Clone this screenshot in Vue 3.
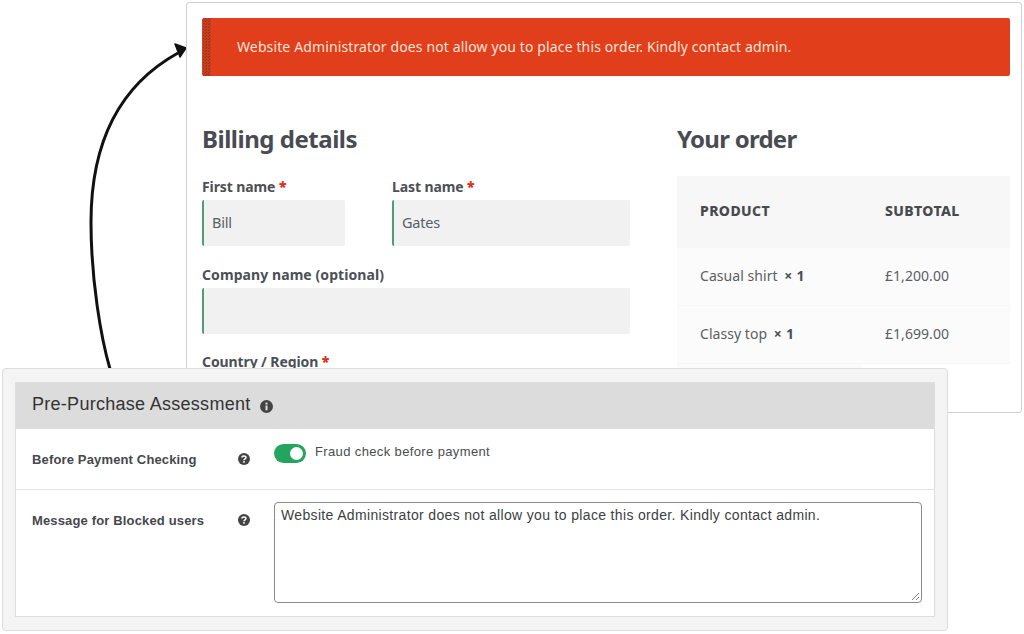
<script setup>
const orders = [
  { name: 'Casual shirt', price: '£1,200.00' },
  { name: 'Classy top', price: '£1,699.00' },
]
</script>

<template>
  <div class="canvas">
    <svg class="arrow" width="200" height="380" viewBox="0 0 200 380">
      <path d="M110 369C101 338 91 280 91 222C91 138 122 84 178 53" fill="none" stroke="#111" stroke-width="3" />
      <path d="M186 48L175 44L180 57Z" fill="#111" stroke="#111" stroke-width="1.5" stroke-linejoin="round" />
    </svg>

    <section class="shop">
      <div class="banner">Website Administrator does not allow you to place this order. Kindly contact admin.</div>
      <div class="columns">
        <div class="billing">
          <h2 class="bill-h">Billing details</h2>
          <div class="name-row">
            <div class="field first">
              <label>First name <b>*</b></label>
              <div class="input">Bill</div>
            </div>
            <div class="field last">
              <label>Last name <b>*</b></label>
              <div class="input">Gates</div>
            </div>
          </div>
          <div class="field company">
            <label>Company name (optional)</label>
            <div class="input"></div>
          </div>
          <div class="field country">
            <label>Country / Region <b>*</b></label>
          </div>
        </div>
        <div class="order">
          <h2>Your order</h2>
          <div class="table">
            <div class="thead">
              <span class="c1">PRODUCT</span>
              <span class="c2">SUBTOTAL</span>
            </div>
            <div v-for="o in orders" :key="o.name" class="trow">
              <span class="c1">{{ o.name }} <b>× 1</b></span>
              <span class="c2">{{ o.price }}</span>
            </div>
            <div class="tfoot"></div>
          </div>
        </div>
      </div>
    </section>

    <section class="admin">
      <div class="inner">
        <header class="head">
          <span>Pre-Purchase Assessment</span>
          <svg class="ico" width="13" height="13" viewBox="0 0 13 13">
            <circle cx="6.5" cy="6.5" r="6.5" fill="#444" />
            <rect x="5.5" y="5.5" width="2" height="4.8" fill="#e0e0e0" />
            <rect x="5.5" y="2.6" width="2" height="1.9" fill="#e0e0e0" />
          </svg>
        </header>
        <div class="row r1">
          <div class="lab">
            <span>Before Payment Checking</span>
            <svg class="ico" width="12" height="12" viewBox="0 0 12 12">
              <circle cx="6" cy="6" r="6" fill="#444" />
              <path d="M4 4.6C4 2.4 8 2.4 8 4.5C8 5.9 6 5.8 6 7.2" fill="none" stroke="#fff" stroke-width="1.5" />
              <rect x="5.2" y="8.1" width="1.6" height="1.6" fill="#fff" />
            </svg>
          </div>
          <div class="ctl check">
            <span class="toggle"><i></i></span>
            <span class="tl">Fraud check before payment</span>
          </div>
        </div>
        <div class="row r2">
          <div class="lab">
            <span>Message for Blocked users</span>
            <svg class="ico" width="12" height="12" viewBox="0 0 12 12">
              <circle cx="6" cy="6" r="6" fill="#444" />
              <path d="M4 4.6C4 2.4 8 2.4 8 4.5C8 5.9 6 5.8 6 7.2" fill="none" stroke="#fff" stroke-width="1.5" />
              <rect x="5.2" y="8.1" width="1.6" height="1.6" fill="#fff" />
            </svg>
          </div>
          <div class="ctl">
            <div class="area">
              Website Administrator does not allow you to place this order. Kindly contact admin.
              <svg class="grip" width="9" height="9" viewBox="0 0 9 9">
                <path d="M1 8L8 1M5 8L8 5" stroke="#888" stroke-width="1" fill="none" />
              </svg>
            </div>
          </div>
        </div>
      </div>
    </section>
  </div>
</template>

<style scoped>
.canvas {
  position: relative;
  width: 1024px;
  height: 634px;
  overflow: hidden;
  background: #fff;
}
.arrow {
  position: absolute;
  left: 0;
  top: 0;
}

/* Checkout window */
.shop {
  position: absolute;
  left: 186px;
  top: 2px;
  width: 836px;
  height: 411px;
  box-sizing: border-box;
  border: 1px solid #cfcfcf;
  border-radius: 3px;
  background: #fff;
  padding: 15px 11px 0 15px;
  font-family: "Noto Sans", "Open Sans", sans-serif;
  color: #4c5056;
}
.banner {
  position: relative;
  height: 58px;
  box-sizing: border-box;
  background: #e13f1b;
  border-radius: 2px;
  padding-left: 35px;
  color: #fbe3da;
  font-size: 14px;
  letter-spacing: 0.125px;
  line-height: 58px;
}
.banner::before {
  content: "";
  position: absolute;
  left: 1px;
  top: 0;
  bottom: 0;
  width: 8px;
  background:
    linear-gradient(45deg, #7d3a27 25%, transparent 25%, transparent 75%, #7d3a27 75%) 0 0 / 3px 3px,
    #c93d1c;
}
.columns {
  display: flex;
  gap: 47px;
  margin-top: 47px;
}
.billing {
  width: 428px;
  flex: none;
}
.order {
  flex: 1;
}
h2 {
  margin: 0;
  font-size: 24px;
  line-height: 32px;
  font-weight: 700;
  letter-spacing: -0.75px;
  color: #484c52;
}
.bill-h {
  letter-spacing: -0.48px;
}
.name-row {
  display: flex;
  gap: 47px;
  margin-top: 22px;
}
.field label {
  display: block;
  font-size: 14px;
  line-height: 20px;
  font-weight: 700;
  letter-spacing: -0.1px;
  color: #4c5056;
}
.field label b {
  color: #d8321a;
}
.first {
  width: 143px;
}
.last {
  flex: 1;
}
.input {
  height: 46px;
  margin-top: 3px;
  box-sizing: border-box;
  background: #f1f1f1;
  border-left: 2px solid #4f9c77;
  border-radius: 2px;
  padding-left: 8px;
  font-size: 14.5px;
  line-height: 44px;
  letter-spacing: -0.2px;
  color: #5a5e63;
}
.company {
  margin-top: 19px;
}
.company label {
  letter-spacing: 0.08px;
}
.country {
  margin-top: 18px;
}
.table {
  margin-top: 21px;
  font-size: 14px;
}
.thead,
.trow {
  display: flex;
  align-items: center;
  padding-left: 23px;
}
.thead {
  height: 72px;
  padding-bottom: 4px;
  box-sizing: border-box;
  background: #f7f7f7;
  font-weight: 800;
  font-size: 14px;
  letter-spacing: 0.4px;
  color: #474b50;
}
.trow {
  height: 58px;
  padding-bottom: 2px;
  background: #fbfbfb;
  border-bottom: 1px solid #f6f6f6;
  box-sizing: border-box;
  letter-spacing: 0.05px;
  color: #5a5e63;
}
.trow b {
  margin-left: 3px;
  font-size: 14px;
  letter-spacing: 0.3px;
  color: #4c5056;
}
.c1 {
  width: 185px;
}
.tfoot {
  width: 185px;
  height: 5px;
  background: #fbfbfb;
}

/* Admin window */
.admin {
  position: absolute;
  left: 2px;
  top: 368px;
  width: 946px;
  height: 263px;
  box-sizing: border-box;
  border: 1px solid #dcdcdc;
  border-radius: 4px;
  background: #f4f4f4;
  padding: 13px 12px;
  font-family: "Liberation Sans", Arial, sans-serif;
  color: #3f4246;
}
.inner {
  height: 235px;
  box-sizing: border-box;
  border: 1px solid #dedede;
  background: #fff;
}
.head {
  height: 46px;
  padding-bottom: 3px;
  box-sizing: border-box;
  background: #dcdcdc;
  display: flex;
  align-items: center;
  gap: 9px;
  padding-left: 16px;
  font-size: 18px;
  letter-spacing: 0.28px;
  color: #333;
}
.head .ico {
  margin-top: 3px;
}
.row {
  display: flex;
  box-sizing: border-box;
}
.r1 {
  height: 61px;
  border-bottom: 1px solid #e4e4e4;
}
.r2 {
  flex: 1;
}
.lab {
  width: 258px;
  flex: none;
  box-sizing: border-box;
  padding: 0 24px 0 16px;
  display: flex;
  justify-content: space-between;
  align-items: center;
  height: 60px;
  font-size: 13px;
  font-weight: 700;
  letter-spacing: 0.15px;
  color: #45484c;
}
.ctl {
  flex: 1;
  font-size: 13px;
  letter-spacing: 0.37px;
  color: #4a4d51;
}
.check {
  display: flex;
  align-items: center;
  gap: 9px;
  height: 46px;
  padding-top: 1px;
}
.toggle {
  width: 32px;
  height: 19px;
  border-radius: 10px;
  background: #23a55f;
  display: flex;
  justify-content: flex-end;
  align-items: center;
  padding-right: 3px;
  box-sizing: border-box;
}
.toggle i {
  width: 13px;
  height: 13px;
  border-radius: 50%;
  background: #fff;
}
.tl {
  margin-top: -3px;
}
.area {
  position: relative;
  width: 648px;
  height: 101px;
  margin-top: 12px;
  box-sizing: border-box;
  border: 1px solid #8b8b8b;
  border-radius: 4px;
  padding: 3px 6px;
  font-size: 14px;
  line-height: 18px;
  letter-spacing: 0.34px;
  color: #3c3f43;
}
.grip {
  position: absolute;
  right: 1px;
  bottom: 1px;
}
</style>

<style>
html, body {
  margin: 0;
  background: #fff;
}
</style>
